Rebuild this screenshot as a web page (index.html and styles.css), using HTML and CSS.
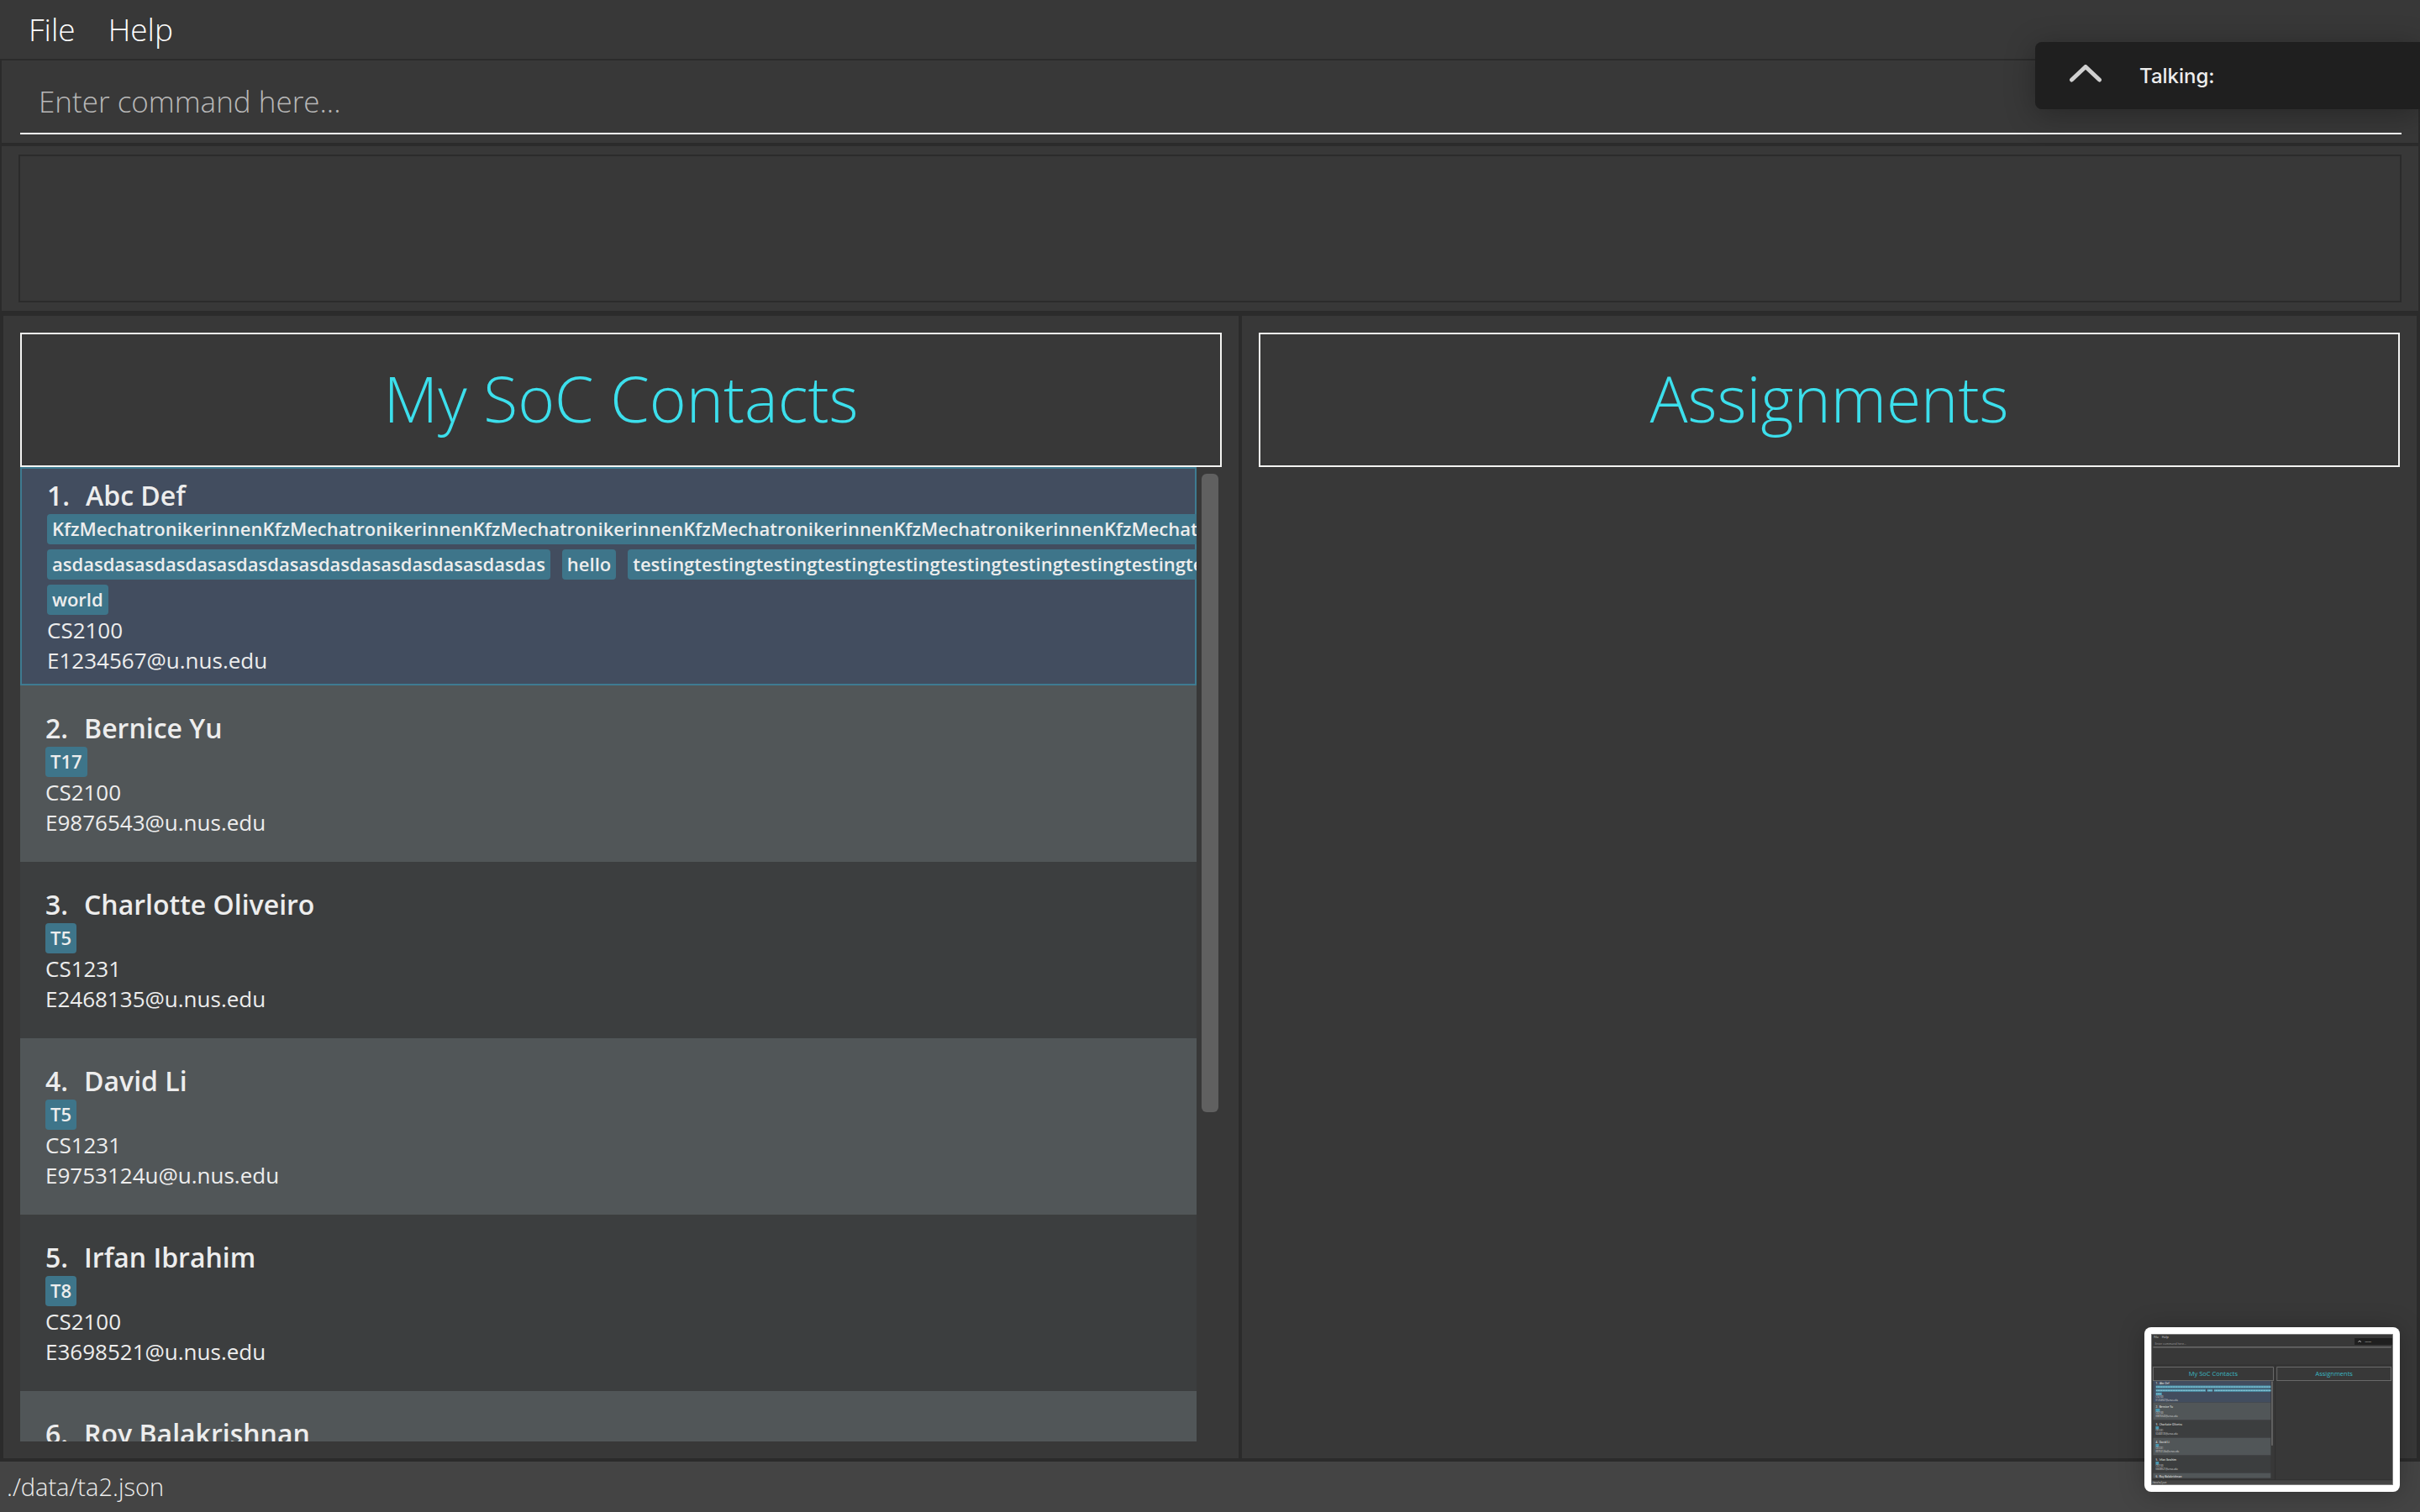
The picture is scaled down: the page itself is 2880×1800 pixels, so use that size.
FILE: index.html
```html
<!DOCTYPE html>
<html lang="en">
<head>
<meta charset="utf-8">
<title>My SoC Contacts</title>
<link rel="stylesheet" href="styles.css">
</head>
<body>
<nav class="menu-bar">
  <button class="menu" type="button">File</button>
  <button class="menu" type="button">Help</button>
</nav>
<div class="command-pane">
  <input class="command-field" type="text" aria-label="Command" placeholder="Enter command here...">
</div>
<div class="result-pane">
  <output class="result-display" aria-label="Result"></output>
</div>
<main class="split">
  <section class="panel">
    <h1 class="panel-title">My SoC Contacts</h1>
    <div class="list-view">
      <ol class="contacts">
        <li class="card selected">
          <h2 class="name"><span>1.</span><span>Abc Def</span></h2>
          <div class="tags">
            <div class="tag-row"><span class="tag">KfzMechatronikerinnenKfzMechatronikerinnenKfzMechatronikerinnenKfzMechatronikerinnenKfzMechatronikerinnenKfzMechatronikerinnen</span></div>
            <div class="tag-row"><span class="tag">asdasdasasdasdasasdasdasasdasdasasdasdasasdasdas</span><span class="tag">hello</span><span class="tag">testingtestingtestingtestingtestingtestingtestingtestingtestingtestingtesting</span></div>
            <div class="tag-row"><span class="tag">world</span></div>
          </div>
          <p class="detail">CS2100</p>
          <p class="detail">E1234567@u.nus.edu</p>
        </li>
        <li class="card">
          <h2 class="name"><span>2.</span><span>Bernice Yu</span></h2>
          <div class="tags"><div class="tag-row"><span class="tag">T17</span></div></div>
          <p class="detail">CS2100</p>
          <p class="detail">E9876543@u.nus.edu</p>
        </li>
        <li class="card">
          <h2 class="name"><span>3.</span><span>Charlotte Oliveiro</span></h2>
          <div class="tags"><div class="tag-row"><span class="tag">T5</span></div></div>
          <p class="detail">CS1231</p>
          <p class="detail">E2468135@u.nus.edu</p>
        </li>
        <li class="card">
          <h2 class="name"><span>4.</span><span>David Li</span></h2>
          <div class="tags"><div class="tag-row"><span class="tag">T5</span></div></div>
          <p class="detail">CS1231</p>
          <p class="detail">E9753124u@u.nus.edu</p>
        </li>
        <li class="card">
          <h2 class="name"><span>5.</span><span>Irfan Ibrahim</span></h2>
          <div class="tags"><div class="tag-row"><span class="tag">T8</span></div></div>
          <p class="detail">CS2100</p>
          <p class="detail">E3698521@u.nus.edu</p>
        </li>
        <li class="card">
          <h2 class="name"><span>6.</span><span>Roy Balakrishnan</span></h2>
        </li>
      </ol>
      <div class="scroll-track"><div class="scroll-thumb"></div></div>
    </div>
  </section>
  <section class="panel">
    <h1 class="panel-title">Assignments</h1>
  </section>
</main>
<footer class="status-bar">./data/ta2.json</footer>

<aside class="talking">
  <button class="collapse" type="button" aria-label="Collapse">
    <svg width="40" height="28" viewBox="0 0 40 28" fill="none" stroke="#d0d0d0" stroke-width="5" stroke-linecap="round" stroke-linejoin="round"><path d="M3.500 18 20 2.500 36.500 18"/></svg>
  </button>
  <span>Talking:</span>
</aside>

<aside class="preview">
  <svg class="preview-image" viewBox="0 0 2880 1800" role="img" aria-label="Window preview">
    <rect width="2880" height="1800" fill="#383838"/>
    <rect y="1740" width="2880" height="60" fill="#444"/>
    <path d="M0 372H2880M1476 372V1738M0 1738H2880" stroke="#2b2b2b" stroke-width="6"/>
    <path d="M24 158H2858" stroke="#6a6a6a" stroke-width="14"/>
    <g fill="none" stroke="#757575" stroke-width="8"><rect x="24" y="396" width="1430" height="160"/><rect x="1498" y="396" width="1358" height="160"/></g>
    <rect x="24" y="560" width="1400" height="256" fill="#424d5f"/>
    <rect x="24" y="816" width="1400" height="210" fill="#515658"/>
    <rect x="24" y="1026" width="1400" height="210" fill="#3c3e3f"/>
    <rect x="24" y="1236" width="1400" height="210" fill="#515658"/>
    <rect x="24" y="1446" width="1400" height="210" fill="#3c3e3f"/>
    <rect x="24" y="1656" width="1400" height="60" fill="#515658"/>
    <rect x="1430" y="564" width="20" height="764" fill="#606060"/>
    <g fill="#4a97b0"><path d="M56 616H1424V646H56ZM56 658H650V688H56ZM668 658H732V688H668ZM748 658H1424V688H748ZM56 698H128V730H56Z"/><path d="M54 889H104V925H54ZM54 1099H92V1135H54ZM54 1309H92V1345H54ZM54 1519H92V1555H54Z"/></g>
    <path d="M62 631H1424M62 673H644M674 673H726M754 673H1424M62 714H122" stroke="#a5d2df" stroke-width="10" stroke-dasharray="10 5"/>
    <g class="preview-title" text-anchor="middle"><text x="739" y="503">My SoC Contacts</text><text x="2177" y="503">Assignments</text></g>
    <g class="preview-menu"><text x="32" y="49">File</text><text x="128" y="49">Help</text></g>
    <text class="preview-hint" x="44" y="134">Enter command here...</text>
    <g class="preview-name"><text x="56" y="602">1.  Abc Def</text><text x="54" y="879">2.  Bernice Yu</text><text x="54" y="1089">3.  Charlotte Oliveiro</text><text x="54" y="1299">4.  David Li</text><text x="54" y="1509">5.  Irfan Ibrahim</text><text x="54" y="1712">6.  Roy Balakrishnan</text></g>
    <g class="preview-detail"><text x="56" y="760">CS2100</text><text x="56" y="796">E1234567@u.nus.edu</text><text x="54" y="953">CS2100</text><text x="54" y="989">E9876543@u.nus.edu</text><text x="54" y="1163">CS1231</text><text x="54" y="1199">E2468135@u.nus.edu</text><text x="54" y="1373">CS1231</text><text x="54" y="1409">E9753124u@u.nus.edu</text><text x="54" y="1583">CS2100</text><text x="54" y="1619">E3698521@u.nus.edu</text><text x="8" y="1781">./data/ta2.json</text></g>
    <rect x="2422" y="50" width="458" height="80" fill="#1f1f1f"/>
    <path d="M2466 98 2482 80 2498 98" fill="none" stroke="#ddd" stroke-width="8"/>
    <text class="preview-talking" x="2546" y="99">Talking:</text>
    <rect x="4" y="4" width="2872" height="1792" fill="none" stroke="#8c8c8c" stroke-width="8"/>
  </svg>
</aside>
</body>
</html>
```
FILE: styles.css
```css
* {
  box-sizing: border-box;
}

body {
  margin: 0;
  height: 100vh;
  display: flex;
  flex-direction: column;
  overflow: hidden;
  background: #383838;
  color: #ededed;
  font-family: "Open Sans", "Noto Sans", sans-serif;
}

button {
  border: 0;
  padding: 0;
  background: none;
  color: inherit;
  font: inherit;
}

.menu-bar {
  display: flex;
  gap: 39px;
  padding: 9px 34px;
}

.menu {
  font-size: 37px;
  font-weight: 300;
  line-height: 52px;
  color: #fff;
}

.command-pane {
  border: 2px solid #2b2b2b;
  padding: 10px 20px 10px 22px;
}

.command-field {
  display: block;
  width: 100%;
  height: 78px;
  border: 0;
  border-bottom: 2px solid #fff;
  border-radius: 0;
  padding: 14px 22px;
  background: transparent;
  color: #fff;
  font-family: inherit;
  font-size: 35px;
  font-weight: 300;
  line-height: 48px;
  outline: 0;
}

.command-field::placeholder {
  color: #b8b8b8;
  opacity: 1;
}

.result-pane {
  border: 2px solid #2b2b2b;
  padding: 10px 20px;
}

.result-display {
  display: block;
  height: 176px;
  border: 2px solid #2b2b2b;
}

.split {
  flex: 1;
  min-height: 0;
  display: grid;
  grid-template-columns: 1470fr 1398fr;
  grid-template-rows: minmax(0, 1fr);
  gap: 4px;
  border: 4px solid #2b2b2b;
  background: #2b2b2b;
}

.panel {
  min-width: 0;
  display: flex;
  flex-direction: column;
  padding: 20px;
  background: #383838;
}

.panel-title {
  margin: 0;
  border: 2px solid #f4f4f2;
  padding: 26px 0 30px;
  color: #3cdfec;
  font-size: 75px;
  font-weight: 300;
  line-height: 100px;
  text-align: center;
}

.list-view {
  flex: 1;
  min-height: 0;
  display: flex;
}

.contacts {
  flex: 1;
  min-width: 0;
  margin: 0;
  padding: 0;
  overflow: hidden;
  list-style: none;
}

.card {
  padding: 29px 30px;
  background: #3c3e3f;
}

.card:nth-child(even) {
  background: #515658;
}

.card.selected {
  border: 2px solid #3e7b91;
  padding: 10px 30px;
  background: #424d5f;
}

.name {
  display: flex;
  gap: 19px;
  margin: 0;
  font-size: 32px;
  font-weight: 600;
  line-height: 44px;
}

.tags {
  display: grid;
  gap: 6px;
}

.tag-row {
  display: flex;
  gap: 14px;
}

.tag {
  flex: none;
  padding: 1px 6px 3px;
  border-radius: 4px;
  background: #3e758a;
  font-size: 22px;
  font-weight: 600;
  line-height: 32px;
  white-space: nowrap;
}

.detail {
  margin: 0;
  font-size: 26px;
  line-height: 36px;
}

.scroll-track {
  width: 30px;
  padding: 8px 4px 0 6px;
}

.scroll-thumb {
  height: 66%;
  border-radius: 6px;
  background: #606060;
}

.status-bar {
  padding: 10px 8px;
  background: #444;
  font-size: 29px;
  font-weight: 300;
  line-height: 40px;
}

.talking {
  position: absolute;
  top: 50px;
  right: 0;
  width: 458px;
  height: 80px;
  display: flex;
  align-items: center;
  gap: 44px;
  padding: 2px 0 0 40px;
  border-radius: 8px 0 0 8px;
  background: #1f1f1f;
  box-shadow: 0 6px 36px rgba(0, 0, 0, 0.3);
  color: #ededed;
  font-family: Inter, "Liberation Sans", sans-serif;
  font-size: 24px;
  font-weight: 500;
  line-height: 32px;
}

.collapse {
  display: flex;
}

.preview {
  position: absolute;
  right: 24px;
  bottom: 24px;
  width: 304px;
  padding: 8px;
  border-radius: 8px;
  background: #fff;
  box-shadow: 0 2px 30px rgba(0, 0, 0, 0.25);
}

.preview-image {
  display: block;
  width: 100%;
}

.preview-image text {
  white-space: pre;
  fill: #ddd;
}

.preview-image .preview-title text {
  fill: #38b6c0;
  font-size: 75px;
}

.preview-menu {
  font-size: 37px;
}

.preview-image .preview-hint {
  fill: #999;
  font-size: 35px;
}

.preview-name {
  font-size: 32px;
  font-weight: 600;
}

.preview-detail {
  font-size: 26px;
}

.preview-talking {
  font-size: 22px;
}
```
